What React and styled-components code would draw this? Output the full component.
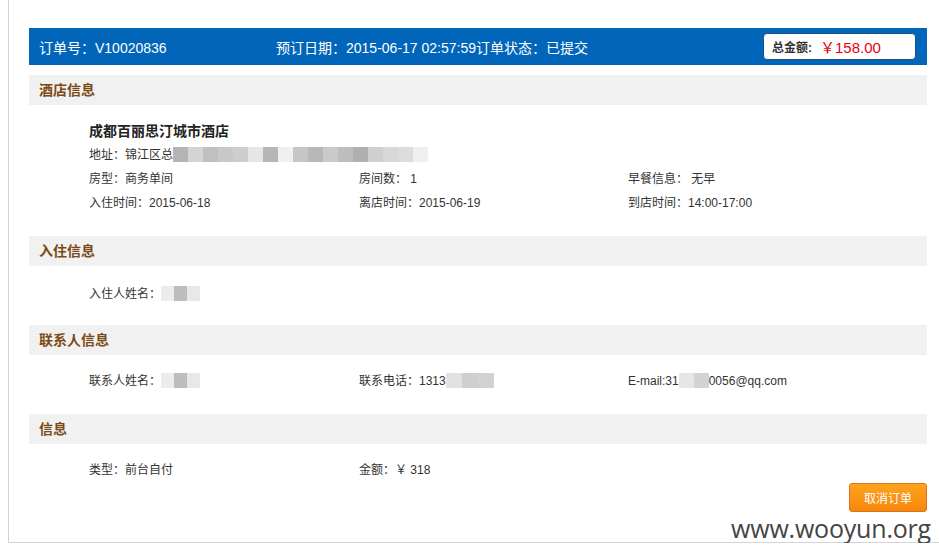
import React from 'react';
import styled, { createGlobalStyle } from 'styled-components';

const GlobalStyle = createGlobalStyle`
    html, body {
        margin: 0;
        padding: 0;
        background: #fff;
        overflow: hidden;
    }
    body {
        font-family: "Liberation Sans", "Noto Sans CJK SC", sans-serif;
        color: #333;
    }
`;

const Page = styled.div`
    padding-left: 8px;
    width: 939px;
    box-sizing: border-box;
`;

/* outer frame: only left and bottom edges are visible */
const Frame = styled.div`
    position: relative;
    border-left: 1px solid #d4d4d4;
    border-bottom: 1px solid #d4d4d4;
    padding: 28px 12px 30px 20px;
`;

const OrderBar = styled.div`
    display: flex;
    align-items: center;
    height: 37px;
    padding: 0 11px 0 10px;
    background-color: #0166b9;
    color: #fff;
    font-size: 14px;
    white-space: nowrap;
`;

const BarItem = styled.span`
    width: ${props => props.w || 'auto'};
    flex-shrink: 0;
`;

const TotalBox = styled.div`
    margin-left: auto;
    display: flex;
    align-items: center;
    width: 153px;
    height: 27px;
    box-sizing: border-box;
    padding-left: 8px;
    background: #fff;
    border: 1px solid #1d4f82;
    border-radius: 4px;
`;

const TotalLabel = styled.span`
    font-size: 12px;
    font-weight: bold;
    color: #333;
    margin-right: 8px;
`;

const TotalPrice = styled.span`
    font-size: 15px;
    color: #e60012;
`;

const SectionTitle = styled.div`
    margin-top: ${props => props.first ? '10px' : '0'};
    height: 30px;
    line-height: 30px;
    padding-left: 10px;
    background-color: #f1f1f1;
    color: #7b4a14;
    font-size: 14px;
    font-weight: bold;
`;

const SectionBody = styled.div`
    padding: ${props => props.pad || '15px 0 20px'};
    padding-left: 60px;
    font-size: 12px;
    line-height: 24px;
`;

const HotelName = styled.div`
    font-size: 14px;
    font-weight: bold;
    color: #222;
`;

const Grid = styled.div`
    display: grid;
    grid-template-columns: 270px 269px 1fr;
`;

const Cell = styled.div`
    white-space: nowrap;
`;

const Mosaic = styled.span`
    display: inline-flex;
    vertical-align: middle;
    height: 15px;
    margin-top: -3px;
`;

const Tile = styled.span`
    display: inline-block;
    width: ${props => props.w || 15}px;
    height: 15px;
    background: ${props => props.c};
`;

const ButtonRow = styled.div`
    display: flex;
    justify-content: flex-end;
    padding-top: 1px;
`;

const CancelButton = styled.button`
    width: 78px;
    height: 29px;
    border: 1px solid #d97418;
    border-radius: 3px;
    background: linear-gradient(#ffa21f, #f7870c);
    color: #fff;
    font-family: "Liberation Sans", "Noto Sans CJK SC", sans-serif;
    font-size: 12px;
    cursor: pointer;
`;

const Watermark = styled.div`
    position: absolute;
    right: 8px;
    bottom: -3px;
    font-family: "Open Sans", "DejaVu Sans", sans-serif;
    font-size: 25px;
    color: #444;
    letter-spacing: -0.2px;
`;

const Blur = ({ shades, w }) => (
    <Mosaic>
        {shades.map((c, i) => <Tile key={i} c={c} w={w} />)}
    </Mosaic>
);

const addressShades = ['#b4b4b4', '#d4d4d4', '#c0c0c0', '#c8c8c8', '#cdcdcd', '#e6e6e6', '#b6b6b6', '#f0f0f0',
    '#c6c6c6', '#b8b8b8', '#cacaca', '#bebebe', '#b0b0b0', '#cfcfcf', '#d8d8d8', '#dcdcdc', '#efefef'];
const nameShades = ['#ececec', '#bdbdbd', '#e8e8e8'];

const App = () => (
    <Page>
        <GlobalStyle />
        <Frame>
            <OrderBar>
                <BarItem w="237px">订单号：V10020836</BarItem>
                <BarItem>预订日期：2015-06-17 02:57:59订单状态：已提交</BarItem>
                <TotalBox>
                    <TotalLabel>总金额:</TotalLabel>
                    <TotalPrice>￥158.00</TotalPrice>
                </TotalBox>
            </OrderBar>

            <SectionTitle first>酒店信息</SectionTitle>
            <SectionBody pad="14px 0 21px">
                <HotelName>成都百丽思汀城市酒店</HotelName>
                <div>地址：锦江区总<Blur shades={addressShades} /></div>
                <Grid>
                    <Cell>房型：商务单间</Cell>
                    <Cell>房间数： 1</Cell>
                    <Cell>早餐信息： 无早</Cell>
                    <Cell>入住时间：2015-06-18</Cell>
                    <Cell>离店时间：2015-06-19</Cell>
                    <Cell>到店时间：14:00-17:00</Cell>
                </Grid>
            </SectionBody>

            <SectionTitle>入住信息</SectionTitle>
            <SectionBody pad="16px 0 19px">
                <div>入住人姓名：<Blur shades={nameShades} w={13} /></div>
            </SectionBody>

            <SectionTitle>联系人信息</SectionTitle>
            <SectionBody pad="14px 0 21px">
                <Grid>
                    <Cell>联系人姓名：<Blur shades={nameShades} w={13} /></Cell>
                    <Cell>联系电话：1313<Blur shades={['#e2e2e2', '#cfcfcf', '#d2d2d2']} w={16} /></Cell>
                    <Cell>E-mail:31<Blur shades={['#e6e6e6', '#d3d3d3']} w={15} />0056@qq.com</Cell>
                </Grid>
            </SectionBody>

            <SectionTitle>信息</SectionTitle>
            <SectionBody pad="14px 0 0">
                <Grid>
                    <Cell>类型：前台自付</Cell>
                    <Cell>金额：￥ 318</Cell>
                </Grid>
            </SectionBody>
            <ButtonRow>
                <CancelButton>取消订单</CancelButton>
            </ButtonRow>

            <Watermark>www.wooyun.org</Watermark>
        </Frame>
    </Page>
);

export default App;
